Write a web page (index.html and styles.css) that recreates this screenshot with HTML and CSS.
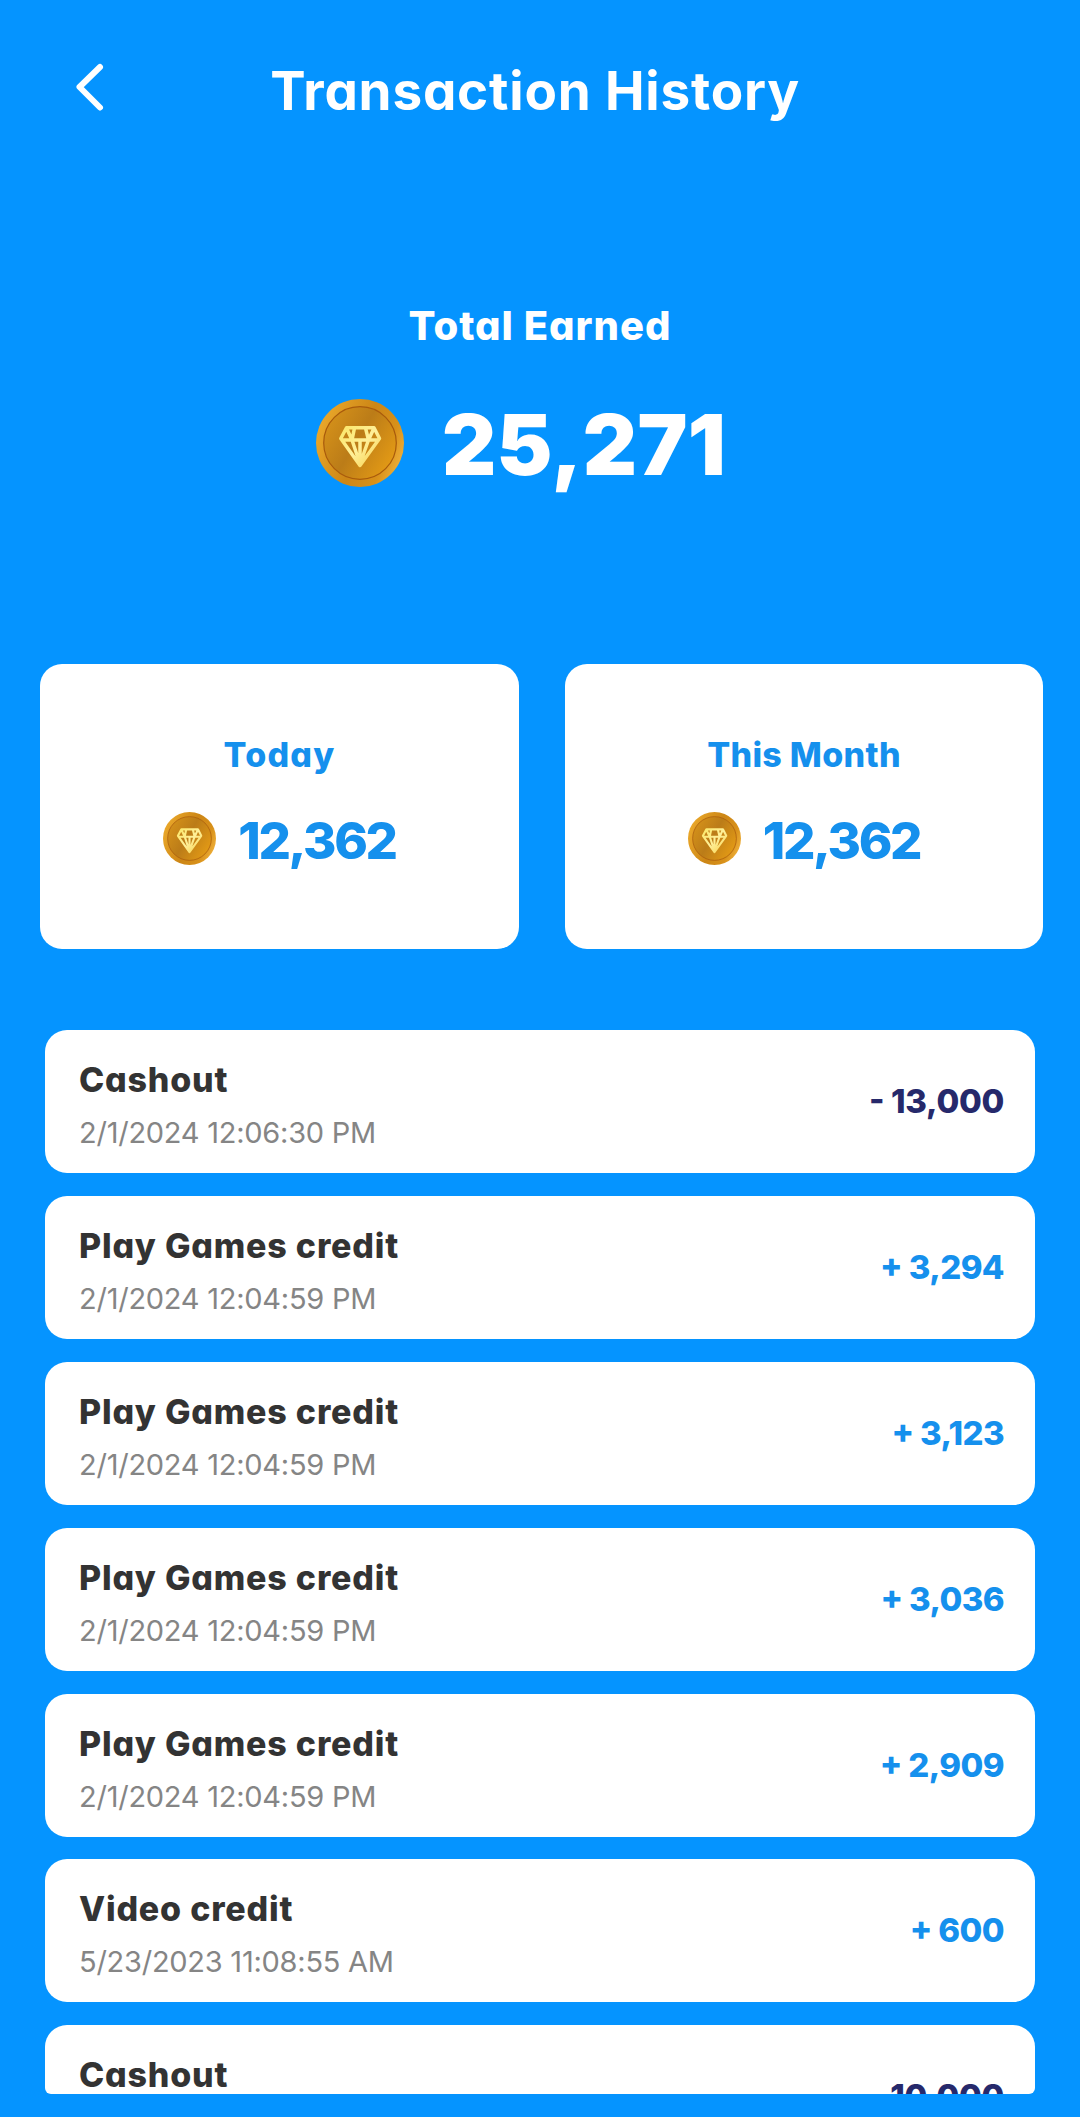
FILE: index.html
```html
<!DOCTYPE html>
<html lang="en">
<head>
    <meta charset="UTF-8">
    <meta name="viewport" content="width=device-width, initial-scale=1.0">
    <title>Transaction History</title>
    <link rel="stylesheet" href="styles.css">
</head>
<body>

<!-- Coin artwork, reused by every balance -->
<svg class="defs" width="0" height="0">
    <defs>
        <linearGradient id="coinRim" x1="0" y1="0.3" x2="1" y2="0.7">
            <stop offset="0" stop-color="#eba92b"/>
            <stop offset="0.5" stop-color="#cc8616"/>
            <stop offset="0.8" stop-color="#d8911a"/>
            <stop offset="1" stop-color="#f0b13c"/>
        </linearGradient>
        <linearGradient id="coinFace" x1="0" y1="0.2" x2="1" y2="0.8">
            <stop offset="0" stop-color="#d6921a"/>
            <stop offset="0.45" stop-color="#bb7c18"/>
            <stop offset="1" stop-color="#e79d15"/>
        </linearGradient>
        <linearGradient id="coinGem" x1="0" y1="0" x2="1" y2="1">
            <stop offset="0" stop-color="#fbe76a"/>
            <stop offset="0.5" stop-color="#fff09a"/>
            <stop offset="1" stop-color="#f6cf4a"/>
        </linearGradient>
        <symbol id="coin" viewBox="0 0 88 88">
            <circle cx="44" cy="44" r="44" fill="url(#coinRim)"/>
            <circle cx="44" cy="44" r="36.3" fill="url(#coinFace)" stroke="#a85a0c" stroke-width="1.2"/>
            <path d="M30.5 28.8H58L63.5 39.5L44 66.5L24.8 39.5Z M25 41H63.5 M38.5 29L36 41L44 65L52.5 41L49.5 29 M44 41V66 M30.5 29L36 41 M58 29L52.5 41" fill="none" stroke="url(#coinGem)" stroke-width="3.5" stroke-linejoin="round"/>
        </symbol>
    </defs>
</svg>

<header class="header">
    <svg class="back" viewBox="0 0 60 60">
        <path d="M40 6L19.5 26L40 46.5" fill="none" stroke="#fff" stroke-width="6" stroke-linecap="round" stroke-linejoin="round"/>
    </svg>
    <h1>Transaction History</h1>
</header>

<section class="total">
    <h2>Total Earned</h2>
    <div class="total-amount">
        <svg class="coin-large"><use href="#coin"/></svg>
        <span>25,271</span>
    </div>
</section>

<section class="cards">
    <div class="card">
        <h3 class="today">Today</h3>
        <div class="card-amount">
            <svg class="coin-small"><use href="#coin"/></svg>
            <span>12,362</span>
        </div>
    </div>
    <div class="card">
        <h3>This Month</h3>
        <div class="card-amount">
            <svg class="coin-small"><use href="#coin"/></svg>
            <span>12,362</span>
        </div>
    </div>
</section>

<main class="list">
    <div class="row">
        <div class="info">
            <div class="name">Cashout</div>
            <div class="date">2/1/2024 12:06:30 PM</div>
        </div>
        <div class="amount minus">- 13,000</div>
    </div>
    <div class="row">
        <div class="info">
            <div class="name">Play Games credit</div>
            <div class="date">2/1/2024 12:04:59 PM</div>
        </div>
        <div class="amount">+ 3,294</div>
    </div>
    <div class="row">
        <div class="info">
            <div class="name">Play Games credit</div>
            <div class="date">2/1/2024 12:04:59 PM</div>
        </div>
        <div class="amount">+ 3,123</div>
    </div>
    <div class="row">
        <div class="info">
            <div class="name">Play Games credit</div>
            <div class="date">2/1/2024 12:04:59 PM</div>
        </div>
        <div class="amount">+ 3,036</div>
    </div>
    <div class="row">
        <div class="info">
            <div class="name">Play Games credit</div>
            <div class="date">2/1/2024 12:04:59 PM</div>
        </div>
        <div class="amount">+ 2,909</div>
    </div>
    <div class="row">
        <div class="info">
            <div class="name">Video credit</div>
            <div class="date">5/23/2023 11:08:55 AM</div>
        </div>
        <div class="amount">+ 600</div>
    </div>
    <div class="row">
        <div class="info">
            <div class="name">Cashout</div>
        </div>
        <div class="amount minus">10,000</div>
    </div>
</main>

</body>
</html>
```
FILE: styles.css
```css
* {
    box-sizing: border-box;
}
body {
    margin: 0;
    height: 2117px;
    overflow: hidden;
    background-color: #0594ff;
    color: #ffffff;
    font-family: 'Inter', sans-serif;
    font-feature-settings: "cv11"; /* single-storey a */
}
h1, h2, h3 {
    margin: 0;
}
.defs {
    position: absolute;
}

/* Header */
.header {
    display: flex;
    align-items: center;
    height: 181px;
    padding: 0 130px 0 60px;
}
.back {
    width: 60px;
    height: 60px;
}
.header h1 {
    flex: 1;
    text-align: center;
    font-size: 53px;
    font-weight: 650;
    letter-spacing: 0.8px;
}

/* Total earned */
.total {
    padding-top: 125px;
    text-align: center;
}
.total h2 {
    font-size: 40px;
    line-height: 40px;
    font-weight: 800;
    letter-spacing: 1px;
}
.total-amount {
    display: flex;
    justify-content: center;
    align-items: center;
    gap: 38px;
    height: 88px;
    margin-top: 53px;
    padding-right: 38px;
    font-size: 84px;
    font-weight: 900;
    letter-spacing: 0.3px;
}
.total-amount span {
    padding-top: 3px;
}
.coin-large {
    width: 88px;
    height: 88px;
}

/* Today / This Month */
.cards {
    display: grid;
    grid-template-columns: 479px 478px;
    gap: 46px;
    padding: 177px 37px 0 40px;
}
.card {
    height: 285px;
    padding-top: 71px;
    border-radius: 22px;
    background-color: #ffffff;
    color: #1590ed;
    text-align: center;
}
.card h3 {
    font-size: 34px;
    line-height: 40px;
    font-weight: 800;
    letter-spacing: 0.3px;
}
.card .today {
    letter-spacing: 1.2px;
}
.card-amount {
    display: flex;
    justify-content: center;
    align-items: center;
    gap: 22px;
    height: 53px;
    margin-top: 37px;
    font-size: 51px;
    font-weight: 800;
    letter-spacing: -2.4px;
}
.card-amount span {
    padding-top: 3px;
}
.coin-small {
    width: 53px;
    height: 53px;
}

/* Transactions */
.list {
    display: flex;
    flex-direction: column;
    gap: 22.9px;
    height: 1064px;
    margin: 81px 45px 0;
    overflow: hidden;
    border-radius: 6px;
}
.row {
    display: flex;
    justify-content: space-between;
    flex-shrink: 0;
    height: 143px;
    padding: 0 31px 0 34px;
    border-radius: 22px;
    background-color: #ffffff;
}
.info {
    padding-top: 23px;
    line-height: 53px;
}
.name {
    color: #333333;
    font-size: 34px;
    font-weight: 800;
    letter-spacing: 0.8px;
}
.date {
    color: #858585;
    font-size: 29px;
    letter-spacing: -0.25px;
}
.amount {
    color: #1590ed;
    font-size: 33px;
    line-height: 143px;
    font-weight: 800;
    letter-spacing: -0.6px;
    font-feature-settings: "cv11", "case"; /* raised minus */
}
.minus {
    color: #26296b;
    letter-spacing: -0.3px;
}
```
